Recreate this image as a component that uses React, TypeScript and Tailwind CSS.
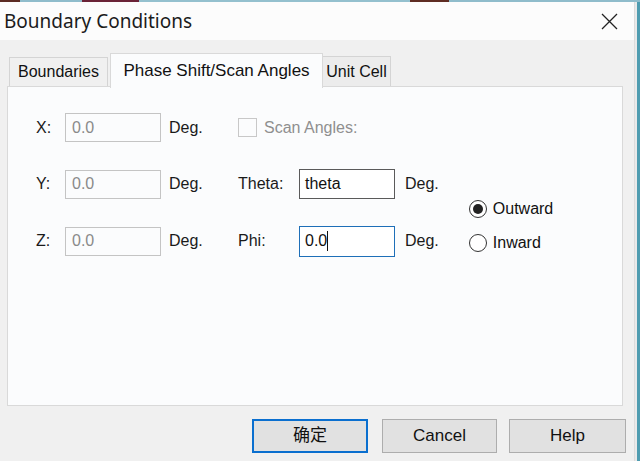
import React from "react";

const font = { fontFamily: '"Liberation Sans", "Noto Sans CJK SC", Arial, sans-serif' };

function Deg({ w }: { w: string }) {
  return <span className={`${w} text-[16px] text-[#1a1a1a]`}>Deg.</span>;
}

export default function App() {
  return (
    <div
      className="relative w-[640px] h-[461px] overflow-hidden bg-[#f0f0f0] flex flex-col"
      style={font}
    >
      {/* background window strip */}
      <div className="flex h-[2px] shrink-0">
        <div className="w-[20px] bg-[#5b2b22]" />
        <div className="w-[62px] bg-[#8fbccb]" />
        <div className="w-[57px] bg-[#6a2236]" />
        <div className="w-[271px] bg-[#94c0ce]" />
        <div className="w-[39px] bg-[#5e2c22]" />
        <div className="flex-1 bg-[#8fbccb]" />
      </div>
      <div className="flex flex-1 min-h-0">
        <div className="flex flex-col flex-1 min-w-0">
          {/* Title bar */}
          <div className="h-[38px] shrink-0 bg-[#fcfcfc] flex items-center justify-between pl-[4px] pr-[16px]">
            <span
              className="text-[19px] text-[#1b1b1b] leading-none"
              style={{ fontFamily: '"Noto Sans", "Noto Sans CJK SC", sans-serif' }}
            >
              Boundary Conditions
            </span>
            <svg width="17" height="17" viewBox="0 0 17 17" className="mt-[1px]">
              <path d="M1 1 L16 16 M16 1 L1 16" stroke="#222" strokeWidth="1.3" fill="none" />
            </svg>
          </div>

          {/* Body */}
          <div className="flex flex-col flex-1 pl-[7px] pr-[11px]">
            {/* Tabs */}
            <div className="flex items-end h-[47px] pl-[2px] relative z-10">
              <div className="w-[99px] h-[29px] border border-b-0 border-[#d4d4d4] bg-[#f0f0f0] flex items-center justify-center text-[16px] text-[#111] mb-px">
                Boundaries
              </div>
              <div className="w-[213px] h-[35px] ml-[2px] border border-b-0 border-[#d9d9d9] bg-[#fbfcfd] flex items-start justify-center pt-[4px] text-[17px] text-[#111] -mb-px">
                Phase Shift/Scan Angles
              </div>
              <div className="w-[68px] h-[30px] border border-b-0 border-l-0 border-[#d4d4d4] bg-[#ececec] flex items-center justify-center text-[16px] text-[#111] mb-px">
                Unit Cell
              </div>
            </div>

            {/* Panel */}
            <div className="h-[320px] -mt-px border border-[#d9d9d9] bg-[#fbfcfd] flex pl-[28px] pt-[26px]">
              <div className="flex flex-col gap-[27px]">
                {/* Row X */}
                <div className="flex items-center h-[29px]">
                  <span className="w-[29px] text-[16px] text-[#1a1a1a]">X:</span>
                  <div className="w-[96px] h-[29px] border border-[#c4c4c4] bg-[#fbfcfd] flex items-center pl-[6px] text-[16px] text-[#8a8a8a]">
                    0.0
                  </div>
                  <span className="ml-[8px] w-[69px] text-[16px] text-[#1a1a1a]">Deg.</span>
                  <div className="w-[19px] h-[19px] border border-[#c8c8c8] bg-[#fbfcfd]" />
                  <span className="ml-[7px] text-[16px] text-[#8f8f8f]">Scan Angles:</span>
                </div>
                {/* Row Y */}
                <div className="flex items-center h-[30px]">
                  <span className="w-[29px] text-[16px] text-[#1a1a1a]">Y:</span>
                  <div className="w-[96px] h-[29px] border border-[#c4c4c4] bg-[#fbfcfd] flex items-center pl-[6px] text-[16px] text-[#8a8a8a]">
                    0.0
                  </div>
                  <span className="ml-[8px] w-[69px] text-[16px] text-[#1a1a1a]">Deg.</span>
                  <span className="w-[61px] text-[16px] text-[#1a1a1a]">Theta:</span>
                  <div className="w-[96px] h-[30px] border border-[#5a5a5a] bg-white flex items-center pl-[5px] text-[16px] text-[#111]">
                    theta
                  </div>
                  <Deg w="ml-[10px]" />
                </div>
                {/* Row Z */}
                <div className="flex items-center h-[30px]">
                  <span className="w-[29px] text-[16px] text-[#1a1a1a]">Z:</span>
                  <div className="w-[96px] h-[29px] border border-[#c4c4c4] bg-[#fbfcfd] flex items-center pl-[6px] text-[16px] text-[#8a8a8a]">
                    0.0
                  </div>
                  <span className="ml-[8px] w-[69px] text-[16px] text-[#1a1a1a]">Deg.</span>
                  <span className="w-[61px] text-[16px] text-[#1a1a1a]">Phi:</span>
                  <div className="w-[96px] h-[31px] border border-[#1e6fb8] bg-white flex items-center pl-[5px] text-[16px] text-[#111]">
                    0.0
                    <span className="inline-block w-px h-[20px] bg-[#111]" />
                  </div>
                  <Deg w="ml-[10px]" />
                </div>
              </div>

              {/* Radios */}
              <div className="ml-[30px] mt-[87px] flex flex-col gap-[16px]">
                <div className="flex items-center h-[18px]">
                  <div className="w-[18px] h-[18px] rounded-full border border-[#333] bg-white flex items-center justify-center">
                    <div className="w-[10px] h-[10px] rounded-full bg-[#222]" />
                  </div>
                  <span className="ml-[6px] text-[16px] text-[#111]">Outward</span>
                </div>
                <div className="flex items-center h-[18px]">
                  <div className="w-[18px] h-[18px] rounded-full border border-[#333] bg-white" />
                  <span className="ml-[6px] text-[16px] text-[#111]">Inward</span>
                </div>
              </div>
            </div>

            {/* Buttons */}
            <div className="flex justify-end mt-[13px] -mr-[3px]">
              <button className="w-[116px] h-[34px] border-2 border-[#0a6fcf] bg-[#e1e1e1] text-[17px] text-[#111] flex items-center justify-center">
                确定
              </button>
              <button className="ml-[14px] w-[115px] h-[34px] border border-[#adadad] bg-[#e1e1e1] text-[17px] text-[#111] flex items-center justify-center">
                Cancel
              </button>
              <button className="ml-[12px] w-[117px] h-[34px] border border-[#adadad] bg-[#e1e1e1] text-[17px] text-[#111] flex items-center justify-center">
                Help
              </button>
            </div>
          </div>
        </div>
        {/* right window edge */}
        <div className="w-[1px] bg-[#dcdcdc]" />
        <div className="w-[2px] bg-[#e9e9e9]" />
        <div className="w-[3px] bg-[#4f9cb0]" />
      </div>
    </div>
  );
}
